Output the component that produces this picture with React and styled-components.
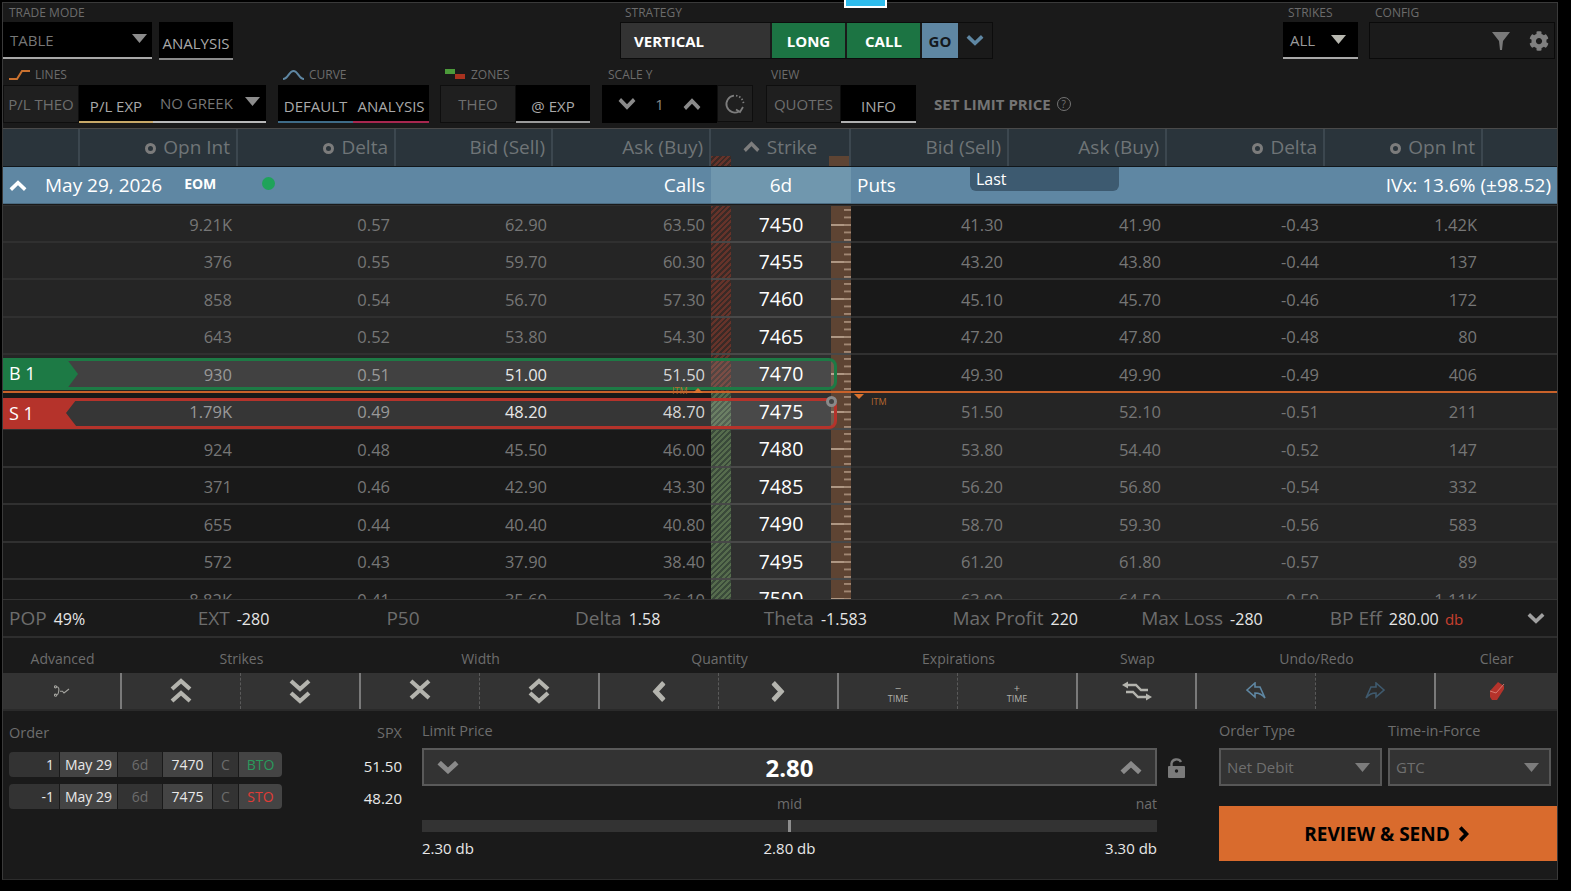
import React from 'react'
import styled, { createGlobalStyle } from 'styled-components'
import { FaCog } from 'react-icons/fa'

const GlobalStyle = createGlobalStyle`
    html, body {
        margin: 0;
        padding: 0;
        background: #000;
    }
    * {
        box-sizing: border-box;
    }
`

const TABLE_COLUMNS = '77px 158px 158px 157px 158px 140px 158px 158px 158px 158px 1fr'
const TOOL_COLUMNS = '119px 239px 239px 239px 239px 119px 239px 1fr'

const ROWS = [
    ['9.21K', '0.57', '62.90', '63.50', '7450', '41.30', '41.90', '-0.43', '1.42K'],
    ['376', '0.55', '59.70', '60.30', '7455', '43.20', '43.80', '-0.44', '137'],
    ['858', '0.54', '56.70', '57.30', '7460', '45.10', '45.70', '-0.46', '172'],
    ['643', '0.52', '53.80', '54.30', '7465', '47.20', '47.80', '-0.48', '80'],
    ['930', '0.51', '51.00', '51.50', '7470', '49.30', '49.90', '-0.49', '406'],
    ['1.79K', '0.49', '48.20', '48.70', '7475', '51.50', '52.10', '-0.51', '211'],
    ['924', '0.48', '45.50', '46.00', '7480', '53.80', '54.40', '-0.52', '147'],
    ['371', '0.46', '42.90', '43.30', '7485', '56.20', '56.80', '-0.54', '332'],
    ['655', '0.44', '40.40', '40.80', '7490', '58.70', '59.30', '-0.56', '583'],
    ['572', '0.43', '37.90', '38.40', '7495', '61.20', '61.80', '-0.57', '89'],
    ['8.82K', '0.41', '35.60', '36.10', '7500', '63.90', '64.50', '-0.59', '1.11K'],
]

const SUMMARY = [
    ['POP', '49%'],
    ['EXT', '-280'],
    ['P50', ''],
    ['Delta', '1.58'],
    ['Theta', '-1.583'],
    ['Max Profit', '220'],
    ['Max Loss', '-280'],
]

const LEGS = [
    { qty: '1', strike: '7470', side: 'BTO', price: '51.50' },
    { qty: '-1', strike: '7475', side: 'STO', price: '48.20' },
]

const ROTATE = { up: 0, right: 90, down: 180, left: 270 }

function Chevron({ dir = 'up', w = 20, h = 12, color = '#8a8a8a', weight = 4 }) {
    return (
        <svg width={w} height={h} viewBox="0 0 20 12" preserveAspectRatio="none" style={{ transform: `rotate(${ROTATE[dir]}deg)` }}>
            <polyline points="2,10.5 10,3 18,10.5" fill="none" stroke={color} strokeWidth={weight} strokeLinejoin="miter" />
        </svg>
    )
}

function Caret({ color = '#8c8c8c' }) {
    return (
        <svg width="15" height="9" viewBox="0 0 15 9">
            <polygon points="0,0 15,0 7.5,9" fill={color} />
        </svg>
    )
}

function StackedGlyph({ top, bottom, offset = 12 }) {
    const pts = { up: '2,11 11,3 20,11', down: '2,3 11,11 20,3' }
    return (
        <svg width="22" height="26" viewBox="0 0 22 26" fill="none" stroke="#b4b4ae" strokeWidth="4.200">
            <polyline points={pts[top]} />
            <polyline points={pts[bottom]} transform={`translate(0 ${offset})`} />
        </svg>
    )
}

function App() {
    return (
        <>
            <GlobalStyle />
            <Page>
                <Panel>
                    <AppMarker />
                    <TopBar>
                        <ToolRow>
                            <Group $left={0}>
                                <GroupLabel $pad={6}>TRADE MODE</GroupLabel>
                                <Controls>
                                    <BlackSelect $width={149}>
                                        <span>TABLE</span>
                                        <Caret />
                                    </BlackSelect>
                                    <Tab $width={74} $active $line="#8a8a8a" $spaced>ANALYSIS</Tab>
                                </Controls>
                            </Group>
                            <Group $left={387}>
                                <GroupLabel $pad={5}>STRATEGY</GroupLabel>
                                <StrategyBar>
                                    <StrategyName>VERTICAL</StrategyName>
                                    <StrategyFlag>LONG</StrategyFlag>
                                    <StrategyFlag>CALL</StrategyFlag>
                                    <GoButton>GO</GoButton>
                                    <GoMenu><Chevron dir="down" w={18} h={11} color="#5f87a3" /></GoMenu>
                                </StrategyBar>
                            </Group>
                            <Group $left={290}>
                                <GroupLabel $pad={5}>STRIKES</GroupLabel>
                                <BlackSelect $width={75} $tone="#9a9a9a" $inset>
                                    <span>ALL</span>
                                    <Caret color="#b8b8b0" />
                                </BlackSelect>
                            </Group>
                            <Group $left={11}>
                                <GroupLabel $pad={6}>CONFIG</GroupLabel>
                                <ConfigBox>
                                    <svg width="18" height="20" viewBox="0 0 18 20">
                                        <polygon points="0,1 18,1 11,10 10,19 8,19 7,10" fill="#7a7a7a" />
                                    </svg>
                                    <FaCog size={20} color="#7f7f7f" />
                                </ConfigBox>
                            </Group>
                        </ToolRow>
                        <ToolRow $second>
                            <Group $left={0}>
                                <GroupLabel $pad={6}>
                                    <svg width="21" height="11" viewBox="0 0 21 11" fill="none" stroke="#c9712f" strokeWidth="2">
                                        <path d="M0 10H8L13 2H21" />
                                    </svg>
                                    LINES
                                </GroupLabel>
                                <Controls $tight>
                                    <Tab $width={76}>P/L THEO</Tab>
                                    <Tab $width={74} $active $line="#c7a868">P/L EXP</Tab>
                                    <BlackSelect $width={113} $compact>
                                        <span>NO GREEK</span>
                                        <Caret />
                                    </BlackSelect>
                                </Controls>
                            </Group>
                            <Group $left={12}>
                                <GroupLabel $pad={5}>
                                    <svg width="21" height="11" viewBox="0 0 21 11" fill="none" stroke="#5f87a3" strokeWidth="2">
                                        <path d="M0 10C5 10 6 2 10.500 2S16 10 21 10" />
                                    </svg>
                                    CURVE
                                </GroupLabel>
                                <Controls $tight>
                                    <Tab $width={75} $active $line="#3f6b87">DEFAULT</Tab>
                                    <Tab $width={76} $active $line="#a8274f">ANALYSIS</Tab>
                                </Controls>
                            </Group>
                            <Group $left={11}>
                                <GroupLabel $pad={5}>
                                    <svg width="21" height="11" viewBox="0 0 21 11">
                                        <rect x="0" y="0" width="10" height="5" fill="#4c9a3a" />
                                        <rect x="10" y="5" width="10" height="5" fill="#a8321f" />
                                    </svg>
                                    ZONES
                                </GroupLabel>
                                <Controls $tight>
                                    <Tab $width={76}>THEO</Tab>
                                    <Tab $width={74} $active $line="#9a9a9a">@ EXP</Tab>
                                </Controls>
                            </Group>
                            <Group $left={12}>
                                <GroupLabel $pad={6}>SCALE Y</GroupLabel>
                                <Controls $tight>
                                    <ScaleBox>
                                        <Chevron dir="down" w={18} h={12} />
                                        <ScaleValue>1</ScaleValue>
                                        <Chevron dir="up" w={18} h={12} />
                                    </ScaleBox>
                                    <RefreshBox>
                                        <svg width="22" height="22" viewBox="0 0 22 22" fill="none" stroke="#7d7d7d" strokeWidth="1.800">
                                            <path d="M15 18.500A8.500 8.500 0 1 1 10 2.600" />
                                            <path d="M12 2.600A8.500 8.500 0 0 1 19.500 11" strokeDasharray="1.500 1.800" />
                                            <path d="M19 14L16 19L12 16.500" />
                                        </svg>
                                    </RefreshBox>
                                </Controls>
                            </Group>
                            <Group $left={13}>
                                <GroupLabel $pad={5}>VIEW</GroupLabel>
                                <Controls $tight>
                                    <Tab $width={75}>QUOTES</Tab>
                                    <Tab $width={75} $active $line="#b0b0b0">INFO</Tab>
                                </Controls>
                            </Group>
                            <LimitHint>
                                SET LIMIT PRICE
                                <HelpMark>?</HelpMark>
                            </LimitHint>
                        </ToolRow>
                    </TopBar>

                    <HeaderRow>
                        <HeadCell />
                        <HeadCell><RadioMark />Opn Int</HeadCell>
                        <HeadCell><RadioMark />Delta</HeadCell>
                        <HeadCell>Bid (Sell)</HeadCell>
                        <HeadCell>Ask (Buy)</HeadCell>
                        <HeadCell $center>
                            <HeadHatch />
                            <Chevron dir="up" w={17} h={11} color="#7d7d7d" />
                            Strike
                            <HeadRuler />
                        </HeadCell>
                        <HeadCell>Bid (Sell)</HeadCell>
                        <HeadCell>Ask (Buy)</HeadCell>
                        <HeadCell><RadioMark />Delta</HeadCell>
                        <HeadCell><RadioMark />Opn Int</HeadCell>
                        <HeadCell $plain />
                    </HeaderRow>

                    <ExpiryRow>
                        <ExpiryLeft>
                            <Chevron w={18} h={11} color="#fff" />
                            <ExpiryDate>May 29, 2026</ExpiryDate>
                            <ExpiryTag>EOM</ExpiryTag>
                            <StatusDot />
                        </ExpiryLeft>
                        <ExpirySide $right>Calls</ExpirySide>
                        <ExpiryDays>6d</ExpiryDays>
                        <ExpirySide>Puts</ExpirySide>
                        <ExpiryIv>IVx: 13.6% (±98.52)</ExpiryIv>
                        <LastTab>Last</LastTab>
                    </ExpiryRow>

                    <ChainView>
                        {ROWS.map((row, i) => {
                            const buy = i === 4
                            const sell = i === 5
                            const bright = buy || sell
                            const callItm = i < 5
                            return (
                                <ChainRow key={row[4]}>
                                    <Cell $itm={callItm} />
                                    <Cell $itm={callItm} $tone={bright ? '#8a8a8a' : undefined}>{row[0]}</Cell>
                                    <Cell $itm={callItm} $tone={bright ? '#8a8a8a' : undefined}>{row[1]}</Cell>
                                    <Cell $itm={callItm} $tone={bright ? '#e4e4e4' : undefined}>{row[2]}</Cell>
                                    <Cell $itm={callItm} $tone={bright ? '#d0d0d0' : undefined}>{row[3]}</Cell>
                                    <StrikeCell>
                                        <Hatch $itm={callItm} />
                                        <StrikeValue>{row[4]}</StrikeValue>
                                        <Ruler />
                                    </StrikeCell>
                                    <Cell $itm={!callItm}>{row[5]}</Cell>
                                    <Cell $itm={!callItm}>{row[6]}</Cell>
                                    <Cell $itm={!callItm}>{row[7]}</Cell>
                                    <Cell $itm={!callItm}>{row[8]}</Cell>
                                    <Cell $itm={!callItm} />
                                    {buy && (
                                        <LegOverlay $color="#1d7a45" $top={3} $height={32}>
                                            <LegFlag $color="#1d7a45" $buy>B 1</LegFlag>
                                        </LegOverlay>
                                    )}
                                    {sell && (
                                        <LegOverlay $color="#b5332b" $top={5} $height={31}>
                                            <LegFlag $color="#b5332b">S 1</LegFlag>
                                            <RingMark />
                                        </LegOverlay>
                                    )}
                                </ChainRow>
                            )
                        })}
                        <MoneyLine />
                        <ItmLabel $left={669} $top={179}>ITM</ItmLabel>
                        <ItmMark $left={690} $top={183} $up />
                        <ItmMark $left={851} $top={189} />
                        <ItmLabel $left={868} $top={190}>ITM</ItmLabel>
                    </ChainView>

                    <SummaryRow>
                        {SUMMARY.map(([label, value]) => (
                            <SummaryItem key={label}>
                                <SummaryLabel>{label}</SummaryLabel>
                                <SummaryValue>{value}</SummaryValue>
                            </SummaryItem>
                        ))}
                        <SummaryItem>
                            <SummaryLabel>BP Eff</SummaryLabel>
                            <SummaryValue>280.00 <DbMark>db</DbMark></SummaryValue>
                            <SummaryMore><Chevron dir="down" w={18} h={11} color="#a0a0a0" /></SummaryMore>
                        </SummaryItem>
                    </SummaryRow>

                    <ToolLabels>
                        <span>Advanced</span>
                        <span>Strikes</span>
                        <span>Width</span>
                        <span>Quantity</span>
                        <span>Expirations</span>
                        <span>Swap</span>
                        <span>Undo/Redo</span>
                        <span>Clear</span>
                    </ToolLabels>

                    <ToolGrid>
                        <ToolGroup>
                            <ToolButton>
                                <svg width="16" height="12" viewBox="0 0 16 12" fill="none" stroke="#a5a5a0" strokeWidth="1.100">
                                    <circle cx="1.500" cy="1.800" r="1.100" />
                                    <circle cx="1.500" cy="10.200" r="1.100" />
                                    <path d="M2.600 1.800C7 1.800 4 10.200 2.600 10.200M6 6.200H8.500L10 8L15 4" />
                                </svg>
                            </ToolButton>
                        </ToolGroup>
                        <ToolGroup>
                            <ToolButton><StackedGlyph top="up" bottom="up" /></ToolButton>
                            <ToolButton><StackedGlyph top="down" bottom="down" /></ToolButton>
                        </ToolGroup>
                        <ToolGroup>
                            <ToolButton><StackedGlyph top="down" bottom="up" offset={9} /></ToolButton>
                            <ToolButton><StackedGlyph top="up" bottom="down" offset={12} /></ToolButton>
                        </ToolGroup>
                        <ToolGroup>
                            <ToolButton><Chevron dir="left" w={22} h={13} color="#b4b4ae" weight={4.500} /></ToolButton>
                            <ToolButton><Chevron dir="right" w={22} h={13} color="#b4b4ae" weight={4.500} /></ToolButton>
                        </ToolGroup>
                        <ToolGroup>
                            <ToolButton><TimeStep><b>−</b>TIME</TimeStep></ToolButton>
                            <ToolButton><TimeStep><b>+</b>TIME</TimeStep></ToolButton>
                        </ToolGroup>
                        <ToolGroup>
                            <ToolButton>
                                <svg width="32" height="20" viewBox="0 0 32 20" fill="none" stroke="#b4b4ae" strokeWidth="2.400">
                                    <polygon points="1,4 7,0.500 7,7.500" fill="#b4b4ae" stroke="none" />
                                    <path d="M6 4H15L20 9H27" />
                                    <polygon points="31,16 25,12.500 25,19.500" fill="#b4b4ae" stroke="none" />
                                    <path d="M26 16H17L12 11H5" />
                                </svg>
                            </ToolButton>
                        </ToolGroup>
                        <ToolGroup>
                            <ToolButton>
                                <svg width="20" height="18" viewBox="0 0 20 18" fill="none" stroke="#5f87a3" strokeWidth="1.600">
                                    <path d="M1 8L9 1V5H14L19 16C16 12 13 11 9 11V15Z" />
                                </svg>
                            </ToolButton>
                            <ToolButton $dim>
                                <svg width="20" height="18" viewBox="0 0 20 18" fill="none" stroke="#3f5a6e" strokeWidth="1.600">
                                    <path d="M19 8L11 1V5H6L1 16C4 12 7 11 11 11V15Z" />
                                </svg>
                            </ToolButton>
                        </ToolGroup>
                        <ToolGroup>
                            <ToolButton>
                                <svg width="16" height="20" viewBox="0 0 16 20">
                                    <polygon points="1,10 9,1 15,5 15,8 8,19 3,19 1,16" fill="#b5332b" />
                                    <polyline points="1,10 7,12 15,3" fill="none" stroke="#e08a80" strokeWidth="0.800" />
                                </svg>
                            </ToolButton>
                        </ToolGroup>
                    </ToolGrid>

                    <OrderArea>
                        <OrderColumn>
                            <OrderHead>
                                <FieldLabel>Order</FieldLabel>
                                <FieldLabel>SPX</FieldLabel>
                            </OrderHead>
                            {LEGS.map((leg) => (
                                <LegRow key={leg.strike}>
                                    <LegChips>
                                        <Chip $width={50} $right>{leg.qty}</Chip>
                                        <Chip $width={57} $bright>May 29</Chip>
                                        <Chip $width={44} $muted>6d</Chip>
                                        <Chip $width={49} $bright>{leg.strike}</Chip>
                                        <Chip $width={25} $muted>C</Chip>
                                        <Chip $width={43} $bright $side={leg.side}>{leg.side}</Chip>
                                    </LegChips>
                                    <LegPrice>{leg.price}</LegPrice>
                                </LegRow>
                            ))}
                        </OrderColumn>

                        <LimitColumn>
                            <FieldLabel>Limit Price</FieldLabel>
                            <PriceBox>
                                <Chevron dir="down" w={22} h={13} color="#8a8a8a" weight={4.500} />
                                <PriceValue>2.80</PriceValue>
                                <Chevron dir="up" w={22} h={13} color="#8a8a8a" weight={4.500} />
                            </PriceBox>
                            <MarkRow>
                                <span />
                                <span>mid</span>
                                <span>nat</span>
                            </MarkRow>
                            <SliderTrack><SliderThumb /></SliderTrack>
                            <ValueRow>
                                <span>2.30 db</span>
                                <span>2.80 db</span>
                                <span>3.30 db</span>
                            </ValueRow>
                        </LimitColumn>

                        <LockColumn>
                            <svg width="17" height="20" viewBox="0 0 17 20">
                                <path d="M3.500 9V5.500A5 4.500 0 0 1 13 4" fill="none" stroke="#7a7a7a" strokeWidth="2.400" />
                                <rect x="0" y="8" width="17" height="12" rx="1" fill="#7a7a7a" />
                                <circle cx="8.500" cy="13" r="1.700" fill="#1a1a1a" />
                            </svg>
                        </LockColumn>

                        <SendColumn>
                            <SelectRow>
                                <SelectField>
                                    <FieldLabel>Order Type</FieldLabel>
                                    <GreySelect>Net Debit<Caret color="#7c7c7c" /></GreySelect>
                                </SelectField>
                                <SelectField>
                                    <FieldLabel>Time-in-Force</FieldLabel>
                                    <GreySelect>GTC<Caret color="#7c7c7c" /></GreySelect>
                                </SelectField>
                            </SelectRow>
                            <SendButton>
                                REVIEW &amp; SEND
                                <Chevron dir="right" w={16} h={10} color="#000" weight={4.500} />
                            </SendButton>
                        </SendColumn>
                    </OrderArea>
                </Panel>
            </Page>
        </>
    )
}

const Page = styled.div`
    width: 1571px;
    height: 891px;
    padding: 2px 0 0 2px;
    background: #000;
    overflow: hidden;
    font-family: "Open Sans", "Liberation Sans", sans-serif;
`

const Panel = styled.div`
    position: relative;
    width: 1556px;
    height: 878px;
    background: #1a1a1a;
    border: 1px solid #3a3a3a;
    border-bottom-color: #2c2c2c;
`

const AppMarker = styled.div`
    position: absolute;
    top: -3px;
    left: 841px;
    width: 43px;
    height: 8px;
    background: #2fbcec;
    border: 2px solid #fff;
    border-top: 0;
`

const TopBar = styled.div`
    height: 126px;
    border-bottom: 1px solid #4a4a4a;
`

const ToolRow = styled.div`
    display: flex;
    align-items: flex-start;
    height: ${(props) => (props.$second ? '62px' : '63px')};
    padding-top: ${(props) => (props.$second ? '1px' : '2px')};
`

const Group = styled.div`
    margin-left: ${(props) => props.$left}px;
`

const GroupLabel = styled.div`
    display: flex;
    align-items: flex-start;
    gap: 5px;
    height: 17px;
    padding-left: ${(props) => props.$pad}px;
    font-size: 12px;
    line-height: 16px;
    color: #6c6c6c;
    & > svg {
        margin-top: 2px;
    }
`

const Controls = styled.div`
    display: flex;
    gap: ${(props) => (props.$tight ? '0' : '7px')};
    margin-top: ${(props) => (props.$tight ? '1px' : '0')};
`

const BlackSelect = styled.div`
    display: flex;
    align-items: center;
    justify-content: space-between;
    width: ${(props) => props.$width}px;
    height: ${(props) => (props.$compact ? '38px' : '37px')};
    padding: 0 ${(props) => (props.$inset ? '12px' : props.$compact ? '6px' : '5px')} 0 7px;
    background: #000;
    border-bottom: 2px solid ${(props) => (props.$compact ? '#b8b8b8' : '#a8a8a8')};
    font-size: 15px;
    color: ${(props) => props.$tone || '#767676'};
    & > svg {
        margin-bottom: ${(props) => (props.$inset ? '0' : '3px')};
    }
`

const Tab = styled.div`
    display: flex;
    align-items: center;
    justify-content: center;
    width: ${(props) => props.$width}px;
    height: 38px;
    padding-top: ${(props) => (props.$active ? '5px' : '0')};
    margin-bottom: ${(props) => (props.$spaced ? '-1px' : '0')};
    background: ${(props) => (props.$active ? '#000' : '#1f1f1f')};
    border: ${(props) => (props.$active ? '0' : '1px solid #0e0e0e')};
    border-bottom: ${(props) => (props.$active ? `2px solid ${props.$line}` : '1px solid #0e0e0e')};
    font-size: 15px;
    color: ${(props) => (props.$active ? '#a9a9a9' : '#6e6e6e')};
`

const StrategyBar = styled.div`
    display: flex;
    height: 37px;
    gap: 2px;
    border: 1px solid #0c0c0c;
`

const StrategyName = styled.div`
    display: flex;
    align-items: center;
    width: 149px;
    padding-left: 13px;
    background: #333;
    font-size: 15px;
    font-weight: 700;
    color: #fff;
`

const StrategyFlag = styled.div`
    display: flex;
    align-items: center;
    justify-content: center;
    width: 73px;
    background: #1c7443;
    font-size: 15px;
    font-weight: 700;
    color: #fff;
`

const GoButton = styled.div`
    display: flex;
    align-items: center;
    justify-content: center;
    width: 36px;
    background: #5f87a3;
    font-size: 15px;
    font-weight: 700;
    color: #14191d;
`

const GoMenu = styled.div`
    display: flex;
    align-items: center;
    justify-content: center;
    width: 34px;
    margin-left: -2px;
`

const ConfigBox = styled.div`
    display: flex;
    align-items: center;
    justify-content: flex-end;
    gap: 19px;
    width: 186px;
    height: 37px;
    padding-right: 5px;
    background: #1b1b1b;
    border: 1px solid #0a0a0a;
`

const ScaleBox = styled.div`
    display: flex;
    align-items: center;
    justify-content: space-between;
    width: 115px;
    height: 38px;
    padding: 0 16px;
    background: #000;
`

const ScaleValue = styled.span`
    font-size: 15px;
    color: #8a8a8a;
`

const RefreshBox = styled.div`
    display: flex;
    align-items: center;
    justify-content: center;
    width: 36px;
    height: 37px;
    background: #1f1f1f;
    border: 1px solid #0e0e0e;
`

const LimitHint = styled.div`
    display: flex;
    align-items: center;
    gap: 6px;
    height: 38px;
    margin: 18px 0 0 18px;
    font-size: 15px;
    font-weight: 700;
    color: #747474;
`

const HelpMark = styled.span`
    display: inline-flex;
    align-items: center;
    justify-content: center;
    width: 14px;
    height: 14px;
    border: 1px solid #747474;
    border-radius: 50%;
    font-size: 10px;
    font-weight: 400;
`

const HeaderRow = styled.div`
    display: grid;
    grid-template-columns: ${TABLE_COLUMNS};
    height: 38px;
    background: #2a343b;
    border-bottom: 1px solid #11161a;
`

const HeadCell = styled.div`
    position: relative;
    display: flex;
    align-items: center;
    justify-content: ${(props) => (props.$center ? 'center' : 'flex-end')};
    gap: 7px;
    padding: 0 ${(props) => (props.$center ? '0' : '6px')} 2px 0;
    border-right: ${(props) => (props.$plain ? '0' : '2px solid #3c474f')};
    font-size: 19px;
    color: #6f7477;
`

const RadioMark = styled.span`
    width: 11px;
    height: 11px;
    margin-top: 3px;
    border: 3px solid #7c7c7c;
    border-radius: 50%;
`

const HeadHatch = styled.div`
    position: absolute;
    left: 0;
    bottom: 0;
    width: 20px;
    height: 10px;
    background: repeating-linear-gradient(135deg, #66332a 0 2px, #3a2a26 2px 4px);
`

const HeadRuler = styled.div`
    position: absolute;
    right: 0;
    bottom: 0;
    width: 20px;
    height: 10px;
    background: #5e4433;
`

const ExpiryRow = styled.div`
    position: relative;
    display: grid;
    grid-template-columns: 550px 158px 140px 158px 1fr;
    height: 37px;
    background: #5f87a3;
    border-bottom: 1px solid #4c6c82;
    font-size: 19px;
    color: #fff;
`

const ExpiryLeft = styled.div`
    display: flex;
    align-items: center;
    padding-left: 6px;
`

const ExpiryDate = styled.span`
    margin-left: 18px;
`

const ExpiryTag = styled.span`
    margin: 0 0 3px 22px;
    font-size: 14px;
    font-weight: 700;
`

const StatusDot = styled.span`
    width: 13px;
    height: 13px;
    margin: 0 0 3px 46px;
    border-radius: 50%;
    background: #1fa35a;
`

const ExpirySide = styled.div`
    display: flex;
    align-items: center;
    justify-content: ${(props) => (props.$right ? 'flex-end' : 'flex-start')};
    padding: 0 6px;
`

const ExpiryDays = styled.div`
    display: flex;
    align-items: center;
    justify-content: center;
    background: #7097ae;
`

const ExpiryIv = styled.div`
    display: flex;
    align-items: center;
    justify-content: flex-end;
    padding: 0 6px 0 0;
`

const LastTab = styled.div`
    position: absolute;
    top: 0;
    left: 967px;
    width: 149px;
    height: 24px;
    padding-left: 6px;
    background: #3d5a70;
    border-radius: 0 0 6px 6px;
    font-size: 16px;
    line-height: 24px;
`

const ChainView = styled.div`
    position: relative;
    height: 395px;
    margin-top: 1px;
    overflow: hidden;
    border-bottom: 1px solid #333;
`

const ChainRow = styled.div`
    position: relative;
    display: grid;
    grid-template-columns: ${TABLE_COLUMNS};
    height: 37.5px;
    &:first-child > div {
        border-top: 1px solid #303030;
    }
`

const Cell = styled.div`
    display: flex;
    align-items: center;
    justify-content: flex-end;
    padding: 3px 6px 0 0;
    background: ${(props) => (props.$itm ? '#252525' : '#191919')};
    border-bottom: 2px solid #303030;
    font-size: 16.5px;
    color: ${(props) => props.$tone || '#767676'};
`

const StrikeCell = styled.div`
    display: flex;
    height: 37.5px;
    background: #2f2f2f;
    border-bottom: 2px solid #484848;
`

const Hatch = styled.div`
    width: 20px;
    background: ${(props) =>
        props.$itm
            ? 'repeating-linear-gradient(135deg, #66332a 0 2px, #3a2a26 2px 4px)'
            : 'repeating-linear-gradient(135deg, #566c4d 0 2px, #3a4a3a 2px 4px)'};
`

const StrikeValue = styled.div`
    display: flex;
    flex: 1;
    align-items: center;
    justify-content: center;
    padding-top: 2px;
    font-size: 19.5px;
    color: #fff;
`

const Ruler = styled.div`
    width: 20px;
    background-color: #5e4433;
    background-image:
        linear-gradient(#a08672 2px, transparent 2px),
        linear-gradient(#b09884 2px, transparent 2px);
    background-size: 7px 7.5px, 20px 37.5px;
    background-position: right 3px, right 18px;
    background-repeat: repeat-y;
`

const LegOverlay = styled.div`
    position: absolute;
    top: ${(props) => props.$top}px;
    left: 0;
    width: 834px;
    height: ${(props) => props.$height}px;
    background: rgba(255, 255, 255, 0.13);
    border: 3px solid ${(props) => props.$color};
    border-left: 0;
    border-radius: 0 8px 8px 0;
`

const LegFlag = styled.div`
    position: absolute;
    top: -3px;
    bottom: -3px;
    left: 0;
    width: 75px;
    padding-left: 6px;
    background: ${(props) => props.$color};
    clip-path: ${(props) =>
        props.$buy
            ? 'polygon(0 0, 84% 0, 100% 50%, 84% 100%, 0 100%)'
            : 'polygon(0 0, 100% 0, 84% 50%, 100% 100%, 0 100%)'};
    font-size: 18px;
    line-height: 31px;
    color: #fff;
`

const RingMark = styled.span`
    position: absolute;
    top: -5px;
    right: -3px;
    width: 11px;
    height: 11px;
    border: 3px solid #8a8a8a;
    border-radius: 50%;
    background: #444;
`

const MoneyLine = styled.div`
    position: absolute;
    top: 186px;
    left: 0;
    right: 0;
    height: 2px;
    background: #c9622a;
`

const ItmLabel = styled.span`
    position: absolute;
    top: ${(props) => props.$top}px;
    left: ${(props) => props.$left}px;
    font-size: 9px;
    color: #b8682f;
`

const ItmMark = styled.span`
    position: absolute;
    top: ${(props) => props.$top}px;
    left: ${(props) => props.$left}px;
    width: 0;
    height: 0;
    border-left: 5px solid transparent;
    border-right: 5px solid transparent;
    border-${(props) => (props.$up ? 'bottom' : 'top')}: 5px solid #d9722f;
`

const SummaryRow = styled.div`
    display: grid;
    grid-template-columns: repeat(7, 188.7px) 1fr;
    height: 38px;
    padding-left: 6px;
    border-bottom: 2px solid #2e2e2e;
`

const SummaryItem = styled.div`
    display: flex;
    align-items: center;
    gap: 7px;
`

const SummaryLabel = styled.span`
    font-size: 19px;
    color: #6d6d6d;
`

const SummaryValue = styled.span`
    padding-top: 2px;
    font-size: 16px;
    color: #e6e6e6;
`

const DbMark = styled.span`
    margin-left: 2px;
    color: #c8402f;
    font-size: 15px;
`

const SummaryMore = styled.span`
    display: flex;
    margin-left: auto;
    margin-right: 12px;
`

const ToolLabels = styled.div`
    display: grid;
    grid-template-columns: ${TOOL_COLUMNS};
    align-items: center;
    height: 35px;
    padding-top: 5px;
    font-size: 14px;
    color: #6d6d6d;
    & > span {
        text-align: center;
    }
`

const ToolGrid = styled.div`
    display: grid;
    grid-template-columns: ${TOOL_COLUMNS};
    height: 38px;
    border-bottom: 2px solid #2a2a2a;
`

const ToolGroup = styled.div`
    display: flex;
    border-right: 2px solid #7a7a7a;
    &:last-child {
        border-right: 0;
    }
`

const ToolButton = styled.div`
    display: flex;
    flex: 1;
    align-items: center;
    justify-content: center;
    background: ${(props) => (props.$dim ? '#2c2c2c' : '#333')};
    & + & {
        border-left: 1px dashed #5a5a5a;
    }
`

const TimeStep = styled.div`
    display: flex;
    flex-direction: column;
    align-items: center;
    padding-top: 3px;
    font-size: 9px;
    line-height: 11px;
    color: #b0b0aa;
    & > b {
        font-size: 11px;
        line-height: 11px;
        font-weight: 400;
    }
`

const OrderArea = styled.div`
    display: flex;
    height: 168px;
    padding-top: 9px;
`

const OrderColumn = styled.div`
    width: 393px;
    margin: 0 20px 0 6px;
`

const OrderHead = styled.div`
    display: flex;
    justify-content: space-between;
    height: 29px;
    padding-top: 2px;
    margin-bottom: 2px;
`

const FieldLabel = styled.div`
    height: 23px;
    font-size: 14.5px;
    line-height: 22px;
    color: #6d6d6d;
`

const LegRow = styled.div`
    display: flex;
    align-items: center;
    justify-content: space-between;
    height: 26px;
    margin-bottom: 6px;
`

const LegChips = styled.div`
    display: flex;
    overflow: hidden;
    gap: 1px;
    border-radius: 4px;
`

const SIDE_COLORS = { BTO: '#2a9a5c', STO: '#e03c36' }

const Chip = styled.div`
    display: flex;
    align-items: center;
    justify-content: ${(props) => (props.$right ? 'flex-end' : 'center')};
    width: ${(props) => props.$width}px;
    height: 25px;
    padding-right: ${(props) => (props.$right ? '5px' : '0')};
    background: ${(props) => (props.$bright ? '#444' : '#333')};
    font-size: 14px;
    color: ${(props) => SIDE_COLORS[props.$side] || (props.$muted ? '#6c6c6c' : '#e8e8e8')};
`

const LegPrice = styled.div`
    padding-top: 3px;
    font-size: 15px;
    color: #e8e8e8;
`

const LimitColumn = styled.div`
    width: 735px;
`

const PriceBox = styled.div`
    display: flex;
    align-items: center;
    justify-content: space-between;
    height: 38px;
    margin-top: 5px;
    padding: 0 13px;
    background: #333;
    border: 2px solid #5a5a5a;
`

const PriceValue = styled.div`
    font-size: 24px;
    font-weight: 700;
    color: #fff;
`

const MarkRow = styled.div`
    display: grid;
    grid-template-columns: 1fr 1fr 1fr;
    height: 34px;
    padding-top: 8px;
    font-size: 14px;
    color: #6d6d6d;
    & > span:nth-child(2) {
        text-align: center;
    }
    & > span:nth-child(3) {
        text-align: right;
    }
`

const SliderTrack = styled.div`
    display: flex;
    justify-content: center;
    height: 12px;
    background: #333;
`

const SliderThumb = styled.div`
    width: 3px;
    background: #8e8e8e;
`

const ValueRow = styled.div`
    display: grid;
    grid-template-columns: 1fr 1fr 1fr;
    margin-top: 6px;
    font-size: 15px;
    color: #e8e8e8;
    & > span:nth-child(2) {
        text-align: center;
    }
    & > span:nth-child(3) {
        text-align: right;
    }
`

const LockColumn = styled.div`
    display: flex;
    justify-content: center;
    width: 62px;
    padding: 38px 23px 0 0;
`

const SendColumn = styled.div`
    width: 338px;
`

const SelectRow = styled.div`
    display: flex;
    gap: 6px;
`

const SelectField = styled.div`
    width: 163px;
`

const GreySelect = styled.div`
    display: flex;
    align-items: center;
    justify-content: space-between;
    height: 38px;
    margin-top: 5px;
    padding: 0 10px 0 6px;
    background: #333;
    border: 2px solid #575757;
    font-size: 15px;
    color: #6f6f6f;
`

const SendButton = styled.div`
    display: flex;
    align-items: center;
    justify-content: center;
    gap: 6px;
    height: 55px;
    margin-top: 20px;
    background: #d96b2d;
    font-size: 19px;
    font-weight: 700;
    color: #000;
`

export default App
